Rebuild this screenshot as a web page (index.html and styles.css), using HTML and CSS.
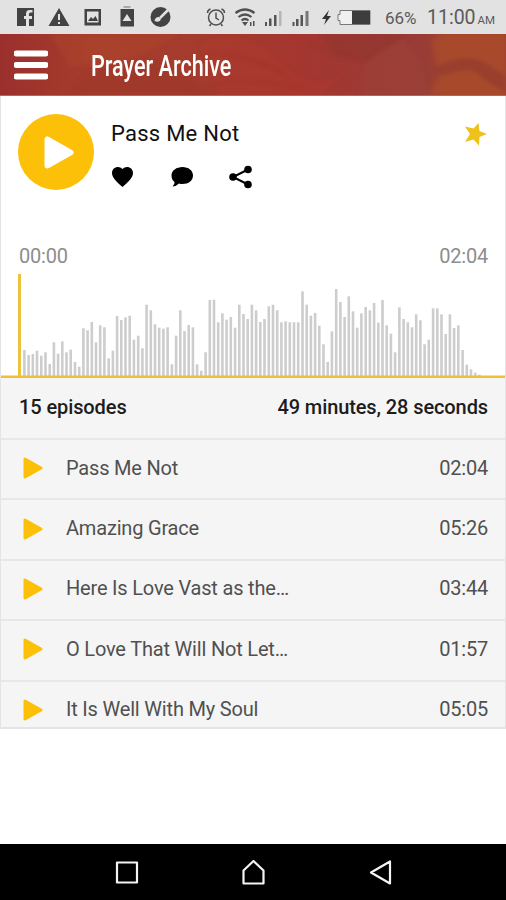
FILE: index.html
```
<!DOCTYPE html>
<html lang="en">
<head>
<meta charset="utf-8">
<title>Prayer Archive</title>
<link rel="stylesheet" href="styles.css">
</head>
<body>
<div class="screen">
  <div class="status">
    <svg class="status-icons" width="380" height="34" viewBox="0 0 380 34">
      <g fill="#434343">
        <path d="M17 8h17v18h-5v-7h3v-3h-3v-2q0-1.500 1.500-1.500h2V10h-3q-3.500 0-3.500 4v2h-2v3h2v7h-9z"/>
        <path d="M59 8l10.500 18h-21zM58 14v6h2v-6zM58 22v2h2v-2z" fill-rule="evenodd"/>
        <path d="M84.500 9h16.500v16.500h-16.500zM87 11.500v11h11.500v-11z" fill-rule="evenodd"/>
        <path d="M88 21l3-4 2 2 2.500-3 2.500 5z"/>
        <path d="M120.500 9H134v17.500h-13.500zM127 14l-4.500 7h9z" fill-rule="evenodd"/>
        <path d="M123.500 6h7v2h-7z" fill="#aaa"/>
        <circle cx="160.500" cy="17" r="10"/>
      </g>
      <path d="M168 10l-8 8" stroke="#e2e2e2" stroke-width="2.500"/>
      <path d="M154.500 21q1-4.500 4.500-4l2 2q-1 4-6.500 2z" fill="#e2e2e2"/>
      <g fill="none" stroke="#505050" stroke-width="1.500">
        <circle cx="216" cy="17.500" r="7.500"/>
        <path d="M216 12.500v5.500l3 2M207.500 13q0-3 3-4M224.500 13q0-3-3-4M211 24l-1.500 2M221 24l1.500 2"/>
        <path d="M235.500 13q9.500-7 19 0M238.500 17q6.500-5 13 0M241.500 20.500q3.500-3 7 0" stroke-width="2.200"/>
      </g>
      <path d="M242 22h6l-3 4zM250 22h1.500v4H250zM253 21h1.500v5H253z" fill="#505050"/>
      <path d="M265 22h2v4h-2zM269 18.500h2.500V26H269zM274 15h2.500v11H274zM292.500 22h2v4h-2zM296 19h2.500v7H296zM300.500 15h2.500v11h-2.500z" fill="#555"/>
      <path d="M279 11h2.500v15H279z" fill="#b5b5b5"/>
      <path d="M305.500 11h3v15h-3z" fill="#777"/>
      <path d="M329 10l-7 9h4l-2 6 7-9h-4z" fill="#333"/>
      <path d="M340 10.500h30v14h-30v-4h-2v-6h2z" fill="#f0f0f0" stroke="#777"/>
      <path d="M352 11h18v13h-18z" fill="#3d3d3d"/>
    </svg>
    <span class="battery">66%</span>
    <span class="clock">11:00<small>AM</small></span>
  </div>

  <header class="header">
    <svg class="texture" viewBox="0 0 506 62" preserveAspectRatio="none">
      <defs>
        <linearGradient id="base"><stop offset="0" stop-color="#9b2f2c"/><stop offset=".18" stop-color="#a63c2c"/><stop offset=".4" stop-color="#a43b2d"/><stop offset=".6" stop-color="#a43630"/><stop offset=".84" stop-color="#983c36"/><stop offset=".88" stop-color="#a0432d"/><stop offset="1" stop-color="#a0432d"/></linearGradient>
        <filter id="soft"><feGaussianBlur stdDeviation="2"/></filter>
      </defs>
      <path d="M0 0h506v62H0z" fill="url(#base)"/>
      <g filter="url(#soft)">
        <path d="M50 0h130l-50 26-60 6z" fill="#b04a2d" opacity=".35"/>
        <path d="M70 62l15-25 70-10 60 35z" fill="#8f2b29" opacity=".25"/>
        <path d="M200 10q45-18 80 18t70 6l-30 28H220z" fill="#b33c2e" opacity=".3"/>
        <path d="M320 0h90l-45 28-30-5z" fill="#87322d" opacity=".35"/>
        <path d="M365 28l35-24q25 20 30 58h-70z" fill="#9e4237" opacity=".5"/>
        <path d="M432 12q-2-10 12-12h62v62h-76q2-12 10-19z" fill="#b0502b" opacity=".5"/>
        <path d="M434 34q28-16 50-6l22 14v16q-16-7-30-20-12-5-34 4z" fill="#8c332e" opacity=".5"/>
        <path d="M210 52q35-10 90 2M205 20q50 0 85 24M350 24l-40-14M365 28l35-24" fill="none" stroke="#843029" stroke-width="1.500" opacity=".4"/>
      </g>
    </svg>
    <svg class="menu" width="34" height="30" viewBox="0 0 34 30"><path d="M2.500 3.500h29M2.500 15h29M2.500 26.500h29" stroke="#fff" stroke-width="6" stroke-linecap="round"/></svg>
    <h1>Prayer Archive</h1>
  </header>

  <main class="player">
    <section class="now">
      <svg class="play-big" width="76" height="76" viewBox="0 0 76 76"><circle cx="38" cy="38" r="38" fill="#fdc008"/><path d="M29.500 25.500v26L52.500 38.500z" fill="#fff" stroke="#fff" stroke-width="6" stroke-linejoin="round"/></svg>
      <div class="info">
        <h2>Pass Me Not</h2>
        <svg class="actions" width="144" height="26" viewBox="0 0 144 26">
          <path d="M11.500 23C6 18 1 14 1 9c0-6 7-8 10.500-4C15 1 22 3 22 9c0 5-5 9-10.500 14z"/>
          <path d="M71.500 3c6 0 10.500 3.500 10.500 8.500S77.500 20 71.500 20q-2 0-3.500-.5-3 3-6.500 3 2.500-2 2-4.500-3-2.500-3-6.500C60.500 6.500 65.500 3 71.500 3z"/>
          <path d="M137 5.500L122 13l15 7.500" fill="none" stroke="#000" stroke-width="2"/><circle cx="137" cy="5.500" r="3.800"/><circle cx="122" cy="13" r="3.800"/><circle cx="137" cy="20.500" r="3.800"/>
        </svg>
      </div>
      <svg class="star" width="22" height="24" viewBox="0 0 22 24"><path d="M22 12L14.500 15 14 23.500 8.500 17.500 0 20 5 12 0 4.500 8.500 6.500 13.500 1 14.500 9z" fill="#eec11b"/></svg>
    </section>
    <div class="times"><span>00:00</span><span>02:04</span></div>
    <svg class="wave" id="wave" width="506" height="106" viewBox="0 0 506 106"></svg>
    <div class="summary"><span>15 episodes</span><span class="total">49 minutes, 28 seconds</span></div>
    <ul class="list">
      <li><svg class="play" viewBox="0 0 20 22"><path d="M2 2v18L18 11z"/></svg><span class="name">Pass Me Not</span><time>02:04</time></li>
      <li><svg class="play" viewBox="0 0 20 22"><path d="M2 2v18L18 11z"/></svg><span class="name">Amazing Grace</span><time>05:26</time></li>
      <li><svg class="play" viewBox="0 0 20 22"><path d="M2 2v18L18 11z"/></svg><span class="name">Here Is Love Vast as the…</span><time>03:44</time></li>
      <li><svg class="play" viewBox="0 0 20 22"><path d="M2 2v18L18 11z"/></svg><span class="name">O Love That Will Not Let…</span><time>01:57</time></li>
      <li><svg class="play" viewBox="0 0 20 22"><path d="M2 2v18L18 11z"/></svg><span class="name">It Is Well With My Soul</span><time>05:05</time></li>
    </ul>
  </main>

  <nav class="nav">
    <svg width="506" height="56" viewBox="0 0 506 56" fill="none" stroke="#f4f4f4" stroke-width="2.200" stroke-linejoin="round"><path d="M117 18.500h20v20h-20zM243.500 39.500v-13L253.500 17l10 9.500v13zM390 17.500v22L371 28.500z"/></svg>
  </nav>
</div>
<script src="wave.js"></script>
</body>
</html>
```
FILE: styles.css
```
* { box-sizing: border-box; }
body { margin: 0; background: #fff; font-family: Roboto, "Liberation Sans", sans-serif; }
.screen { width: 506px; height: 900px; display: flex; flex-direction: column; overflow: hidden; }
.status { height: 34px; flex: none; display: flex; align-items: center; background: #e2e2e2; color: #5a5a5a; }
.status-icons { flex: none; }
.battery { width: 47px; padding: 2px 0 0 5px; font-size: 17px; }
.clock { padding-top: 1px; font-size: 19.5px; white-space: nowrap; }
.clock small { font-size: 11.5px; margin-left: 2px; }
.header { height: 62px; flex: none; display: grid; grid-template-columns: 91px 1fr; align-items: center; overflow: hidden; border-bottom: 1px solid #b5665c; }
.texture { grid-area: 1 / 1 / 2 / 3; width: 506px; height: 62px; }
.menu { grid-area: 1 / 1; margin-left: 14px; z-index: 1; }
h1 { grid-area: 1 / 2; margin: 0; padding-top: 2px; z-index: 1; color: #fff; font-size: 29.5px; font-weight: 500; line-height: 60px; white-space: nowrap; transform: scaleX(.733); transform-origin: left; }
.player { height: 633px; flex: none; overflow: hidden; border: solid #e4e4e4; border-width: 0 1px 2px; }
.now { height: 145px; display: flex; align-items: flex-start; padding: 18px 18px 0 17px; }
.info { flex: 1; margin-left: 17px; padding-top: 7px; }
h2 { margin: 0; font-size: 22px; line-height: 26px; font-weight: 400; color: #111; letter-spacing: .25px; }
.actions { display: block; margin-top: 17px; }
.star { margin-top: 8px; }
.times { display: flex; justify-content: space-between; height: 31px; padding: 0 17px 0 18px; font-size: 20px; line-height: 31px; color: #8d8d8d; letter-spacing: -.2px; }
.wave { display: block; margin: 0 -1px; }
.summary { height: 60px; display: flex; justify-content: space-between; padding: 0 17px 0 18px; background: #f5f5f5; font-size: 20px; line-height: 59px; font-weight: 500; color: #1c1c1c; letter-spacing: -.1px; }
.list { margin: 0; padding: 0; list-style: none; background: #f5f5f5; }
.list li { height: 60.4px; display: flex; align-items: center; border-top: 2px solid #e7e7e7; padding: 0 17px 3px 22px; font-size: 20px; color: #505050; letter-spacing: -.19px; }
.play { width: 20px; height: 22px; margin: 1px 23px 0 0; fill: #fdc008; stroke: #fdc008; stroke-width: 3; stroke-linejoin: round; }
.name { flex: 1; white-space: nowrap; }
.nav { height: 56px; flex: none; margin-top: auto; background: #000; }
.nav svg { display: block; }
```
FILE: wave.js
```
// Heights of the sound bars, in thirds of a pixel.
var heights = [78,63,66,76,61,71,36,101,67,104,71,79,42,28,143,137,162,101,152,146,53,76,180,168,176,181,109,121,83,214,197,155,145,142,146,
  35,121,197,135,153,146,35,16,71,228,229,161,188,169,177,145,214,186,171,214,197,162,171,209,214,197,161,164,161,161,161,254,214,181,189,151,95,42,134,
  261,222,177,239,194,145,188,207,197,219,160,228,152,127,71,206,171,161,146,185,167,95,109,203,203,185,126,185,144,152,78,34,20,10,4];
var parts = '';
heights.forEach(function (h, i) {
  var x = 24.4 + i * 4.213;
  parts += '<rect x="' + (x - 1.3).toFixed(1) + '" y="' + (104 - h / 3).toFixed(1) + '" width="2.6" height="' + (h / 3).toFixed(1) + '" fill="#cdcdcd"/>';
});
parts += '<path d="M18 2h3v102h-3z" fill="#edc23c"/><path d="M0 103.500h506v2.500H0z" fill="#f0bf32"/>';
document.getElementById('wave').innerHTML = parts;
```
